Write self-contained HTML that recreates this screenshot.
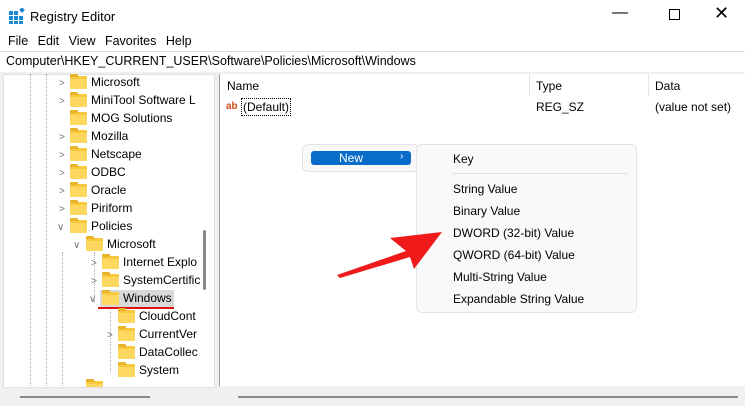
<!DOCTYPE html><html><head><style>
body{margin:0;width:745px;height:406px;overflow:hidden;background:#fff;font-family:"Liberation Sans",sans-serif;font-size:12px;color:#000;position:relative}
.a{position:absolute;white-space:nowrap}
.f{position:absolute;width:17px;height:13px;background:#f8c93c;border-radius:1px}
.f:before{content:"";position:absolute;left:0;top:-2px;width:8px;height:3px;background:#e8b22a;border-radius:1px 1px 0 0}
.f:after{content:"";position:absolute;left:0;top:3px;width:17px;height:10px;background:#fcd860}
.c{position:absolute;font-size:10px;color:#777}
.m{position:absolute;left:453px;font-size:12px}
</style></head><body>
<div class="a" style="left:0;top:0;width:745px;height:32px;background:#fff"></div>
<svg class="a" style="left:9px;top:8px" width="16" height="16"><g fill="#1a8ad4"><rect x="0" y="3" width="4" height="4"/><rect x="5" y="3" width="4" height="4"/><rect x="0" y="8" width="4" height="4"/><rect x="5" y="8" width="4" height="4"/><rect x="10" y="8" width="4" height="4"/><rect x="0" y="13" width="4" height="3"/><rect x="5" y="13" width="4" height="3"/><rect x="10" y="13" width="4" height="3"/><rect x="11" y="0" width="4" height="4" transform="rotate(45 13 2)"/></g></svg>
<div class="a" style="left:30px;top:9px;font-size:13px">Registry Editor</div>
<div class="a" style="left:612px;top:4px;font-size:16px">&#8212;</div>
<div class="a" style="left:669px;top:9px;width:9px;height:9px;border:1px solid #000"></div>
<div class="a" style="left:714px;top:3px;font-size:18px">&#10005;</div>
<div class="a" style="left:8px;top:34px;font-size:12.5px;word-spacing:6px">File Edit View Favorites Help</div>
<div class="a" style="left:0;top:51px;width:745px;height:20px;border-top:1px solid #ddd;border-bottom:1px solid #ccc;background:#fff"></div>
<div class="a" style="left:6px;top:54px;font-size:12.5px">Computer\HKEY_CURRENT_USER\Software\Policies\Microsoft\Windows</div>
<div class="a" style="left:0;top:72px;width:745px;height:334px;background:#f0f0f0"></div>
<div class="a" style="left:3px;top:74px;width:210px;height:312px;background:#fff;border:1px solid #e0e0e0;overflow:hidden">
<div class="f" style="left:82px;top:306px"></div>
</div>
<div class="a" style="left:219px;top:74px;width:526px;height:312px;background:#fff;border-left:1px solid #999"></div>
<div class="a" style="left:203px;top:230px;width:3px;height:60px;background:#888;border-radius:2px"></div>
<div class="a" style="left:20px;top:396px;width:130px;height:2px;background:#888"></div>
<div class="a" style="left:238px;top:396px;width:500px;height:2px;background:#888"></div>
<div class="a" style="left:30px;top:74px;height:312px;border-left:1px dotted #aaa"></div>
<div class="a" style="left:46px;top:74px;height:312px;border-left:1px dotted #aaa"></div>
<div class="a" style="left:62px;top:252px;height:134px;border-left:1px dotted #aaa"></div>
<div class="a" style="left:94px;top:252px;height:50px;border-left:1px dotted #aaa"></div>
<div class="a" style="left:110px;top:307px;height:66px;border-left:1px dotted #aaa"></div>

<div class="c" style="left:59px;top:78px">&gt;</div><div class="f" style="left:70px;top:76px"></div><div class="a" style="left:91px;top:75px">Microsoft</div>
<div class="c" style="left:59px;top:96px">&gt;</div><div class="f" style="left:70px;top:94px"></div><div class="a" style="left:91px;top:93px">MiniTool Software L</div>
<div class="f" style="left:70px;top:112px"></div><div class="a" style="left:91px;top:111px">MOG Solutions</div>
<div class="c" style="left:59px;top:132px">&gt;</div><div class="f" style="left:70px;top:130px"></div><div class="a" style="left:91px;top:129px">Mozilla</div>
<div class="c" style="left:59px;top:150px">&gt;</div><div class="f" style="left:70px;top:148px"></div><div class="a" style="left:91px;top:147px">Netscape</div>
<div class="c" style="left:59px;top:168px">&gt;</div><div class="f" style="left:70px;top:166px"></div><div class="a" style="left:91px;top:165px">ODBC</div>
<div class="c" style="left:59px;top:186px">&gt;</div><div class="f" style="left:70px;top:184px"></div><div class="a" style="left:91px;top:183px">Oracle</div>
<div class="c" style="left:59px;top:204px">&gt;</div><div class="f" style="left:70px;top:202px"></div><div class="a" style="left:91px;top:201px">Piriform</div>
<div class="c" style="left:57px;top:222px">&#8744;</div><div class="f" style="left:70px;top:220px"></div><div class="a" style="left:91px;top:219px">Policies</div>
<div class="c" style="left:73px;top:240px">&#8744;</div><div class="f" style="left:86px;top:238px"></div><div class="a" style="left:107px;top:237px">Microsoft</div>
<div class="c" style="left:91px;top:258px">&gt;</div><div class="f" style="left:102px;top:256px"></div><div class="a" style="left:123px;top:255px">Internet Explo</div>
<div class="c" style="left:91px;top:276px">&gt;</div><div class="f" style="left:102px;top:274px"></div><div class="a" style="left:123px;top:273px">SystemCertific</div>
<div class="a" style="left:100px;top:290px;width:74px;height:18px;background:#d9d9d9"></div>
<div class="c" style="left:89px;top:294px">&#8744;</div><div class="f" style="left:102px;top:292px"></div><div class="a" style="left:123px;top:291px">Windows</div>
<div class="a" style="left:98px;top:307px;width:76px;height:2px;background:#e01010"></div>
<div class="f" style="left:118px;top:310px"></div><div class="a" style="left:139px;top:309px">CloudCont</div>
<div class="c" style="left:107px;top:330px">&gt;</div><div class="f" style="left:118px;top:328px"></div><div class="a" style="left:139px;top:327px">CurrentVer</div>
<div class="f" style="left:118px;top:346px"></div><div class="a" style="left:139px;top:345px">DataCollec</div>
<div class="f" style="left:118px;top:364px"></div><div class="a" style="left:139px;top:363px">System</div>

<div class="a" style="left:227px;top:79px">Name</div>
<div class="a" style="left:529px;top:74px;height:22px;border-left:1px solid #e5e5e5"></div>
<div class="a" style="left:536px;top:79px">Type</div>
<div class="a" style="left:648px;top:74px;height:22px;border-left:1px solid #e5e5e5"></div>
<div class="a" style="left:655px;top:79px">Data</div>
<div class="a" style="left:226px;top:101px;font-size:10px;font-weight:bold;color:#d04a1a">ab</div>
<div class="a" style="left:241px;top:98px;border:1px dotted #000;padding:1px 1px">(Default)</div>
<div class="a" style="left:536px;top:100px">REG_SZ</div>
<div class="a" style="left:655px;top:100px">(value not set)</div>

<div class="a" style="left:302px;top:144px;width:116px;height:26px;background:#f9f9f9;border:1px solid #e3e3e3;border-radius:6px"></div>
<div class="a" style="left:311px;top:151px;width:100px;height:14px;background:#0a6cc9;border-radius:3px"></div>
<div class="a" style="left:339px;top:151px;color:#fff">New</div>
<div class="a" style="left:400px;top:151px;color:#fff;font-size:10px">&#8250;</div>
<div class="a" style="left:416px;top:144px;width:219px;height:167px;background:#f9f9f9;border:1px solid #e3e3e3;border-radius:6px"></div>
<div class="a" style="left:453px;top:173px;width:174px;height:1px;background:#ddd"></div>
<div class="m a" style="top:152px">Key</div>
<div class="m a" style="top:182px">String Value</div>
<div class="m a" style="top:204px">Binary Value</div>
<div class="m a" style="top:226px">DWORD (32-bit) Value</div>
<div class="m a" style="top:248px">QWORD (64-bit) Value</div>
<div class="m a" style="top:270px">Multi-String Value</div>
<div class="m a" style="top:292px">Expandable String Value</div>
<svg class="a" style="left:330px;top:225px" width="120" height="60"><polygon points="7,50 76,26 60,13 112,7 84,44 80,32 10,53" fill="#f01a1a"/></svg>
</body></html>
